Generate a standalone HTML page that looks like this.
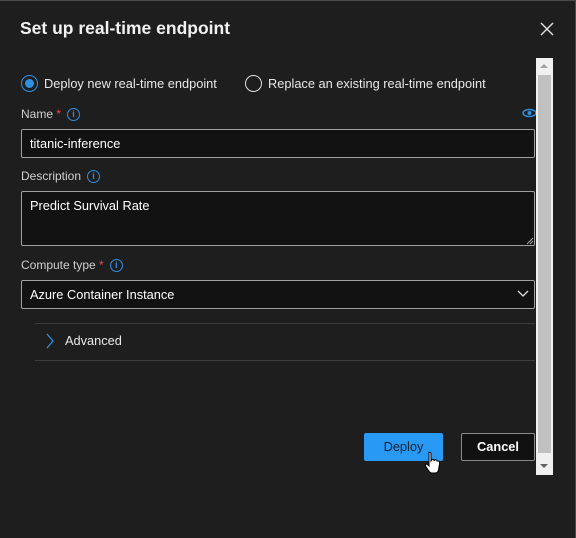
<!DOCTYPE html>
<html><head><style>
*{margin:0;padding:0;box-sizing:border-box}
body{width:576px;height:538px;background:#1e1e1e;font-family:"Liberation Sans",sans-serif;color:#fff;position:relative;overflow:hidden;border-top:1px solid #4a4a4a;border-right:1px solid #4a4a4a}
.a{position:absolute}
.lbl{font-size:12px;color:#d0d0d0}
.req{color:#e8484f}
.info{display:inline-block;width:13px;height:13px;border:1.3px solid #2f8fe0;border-radius:50%;color:#2f8fe0;font-size:9px;text-align:center;line-height:11px;font-weight:bold;vertical-align:middle;margin-left:6px}
.inp{background:#121212;border:1px solid #a0a0a0;border-radius:2px;font-size:12.8px;color:#fff;padding-left:8px}
</style></head><body>
<div class="a" style="left:20px;top:17px;font-size:17.5px;font-weight:bold;color:#f2f2f2">Set up real-time endpoint</div>
<svg class="a" style="left:540px;top:21px" width="14" height="14"><path d="M1 1L13 13M13 1L1 13" stroke="#ddd" stroke-width="1.5"/></svg>

<div class="a" style="left:21px;top:74px;width:17px;height:17px;border:1.5px solid #2f8fe0;border-radius:50%"><div style="position:absolute;left:2.5px;top:2.5px;width:9px;height:9px;background:#2f8fe0;border-radius:50%"></div></div>
<div class="a" style="left:44px;top:75px;font-size:12.8px;color:#e8e8e8">Deploy new real-time endpoint</div>
<div class="a" style="left:245px;top:74px;width:17px;height:17px;border:1.5px solid #e0e0e0;border-radius:50%"></div>
<div class="a" style="left:268px;top:75px;font-size:12.8px;color:#e8e8e8">Replace an existing real-time endpoint</div>

<div class="a lbl" style="left:21px;top:106px">Name <span class="req">*</span><span class="info">i</span></div>
<svg class="a" style="left:522px;top:107px" width="15" height="10"><ellipse cx="7.5" cy="5" rx="6.5" ry="3.5" fill="none" stroke="#2f8fe0" stroke-width="1.5"/><circle cx="7.5" cy="5" r="2" fill="#2f8fe0"/></svg>
<div class="a inp" style="left:21px;top:128px;width:514px;height:29px;line-height:27px">titanic-inference</div>

<div class="a lbl" style="left:21px;top:168px">Description<span class="info">i</span></div>
<div class="a inp" style="left:21px;top:190px;width:514px;height:55px;padding-top:6px">Predict Survival Rate</div>
<svg class="a" style="left:526px;top:236px" width="8" height="8"><path d="M1 7L7 1M4 7L7 4" stroke="#aaa" stroke-width="1"/></svg>

<div class="a lbl" style="left:21px;top:257px">Compute type <span class="req">*</span><span class="info">i</span></div>
<div class="a inp" style="left:21px;top:279px;width:514px;height:29px;line-height:27px">Azure Container Instance</div>
<svg class="a" style="left:517px;top:289px" width="12" height="8"><path d="M1 1L6 6L11 1" stroke="#ddd" stroke-width="1.3" fill="none"/></svg>

<div class="a" style="left:35px;top:322px;width:500px;height:1px;background:#3c3c3c"></div>
<svg class="a" style="left:45px;top:332px" width="10" height="16"><path d="M2 1L8 8L2 15" stroke="#2f8fe0" stroke-width="1.3" fill="none"/></svg>
<div class="a" style="left:65px;top:332px;font-size:12.8px;color:#e8e8e8">Advanced</div>
<div class="a" style="left:35px;top:359px;width:500px;height:1px;background:#3c3c3c"></div>

<div class="a" style="left:536px;top:57px;width:17px;height:417px;background:#f0f0f0"></div>
<div class="a" style="left:538px;top:74px;width:13px;height:378px;background:#c1c1c1"></div>
<svg class="a" style="left:539px;top:62px" width="10" height="6"><path d="M1 5L5 1L9 5Z" fill="#a3a3a3"/></svg>
<svg class="a" style="left:539px;top:462px" width="10" height="6"><path d="M1 1L5 5L9 1Z" fill="#606060"/></svg>

<div class="a" style="left:364px;top:432px;width:79px;height:28px;background:#2899f5;border-radius:2px;color:#102030;font-size:12.8px;text-align:center;line-height:28px">Deploy</div>
<div class="a" style="left:461px;top:432px;width:74px;height:28px;background:#111;border:1px solid #8a8a8a;border-radius:2px;color:#fff;font-size:12.8px;font-weight:bold;text-align:center;line-height:26px">Cancel</div>
<svg class="a" style="left:424px;top:450px" width="18" height="24"><path d="M5 1.5C6 1 7 1.5 7 2.5V10L8 8.5C9 8 10 8.5 10 9.5L11 9C12 8.5 13 9 13 10L14 10C15 10 16 11 15.5 13L14.5 19C14 21 13 22 11 22H8C6.5 22 5.5 21 4.5 19.5L1.5 15C1 14 2 12.5 3.5 13.5L5 15V2.5Z" fill="#fff" stroke="#000" stroke-width="1"/></svg>
</body></html>
